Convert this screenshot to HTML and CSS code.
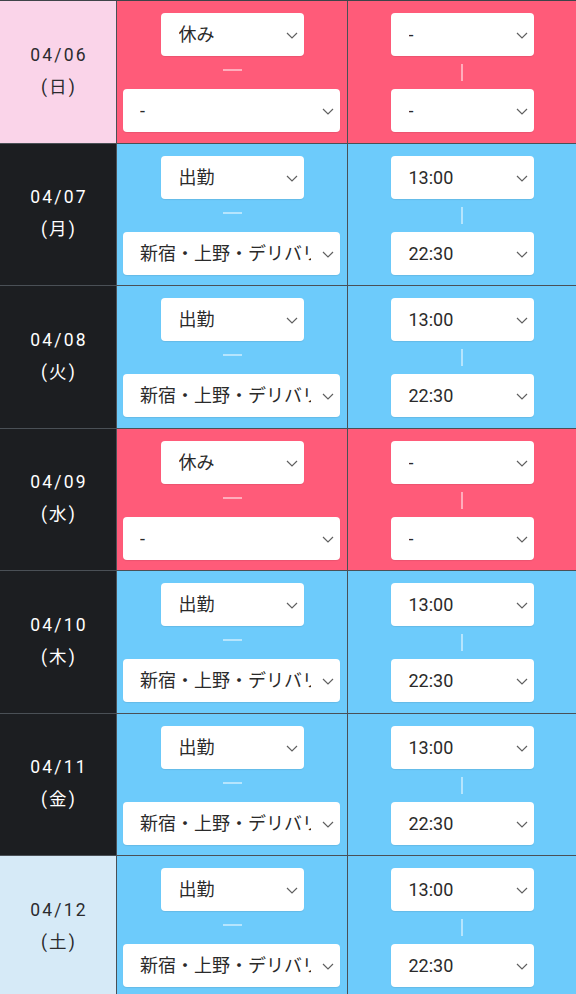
FILE: index.html
```html
<!DOCTYPE html>
<html>
  <head>
    <meta charset="utf-8" />
    <title>シフト提出</title>
    <link rel="stylesheet" href="styles.css">
  </head>

  <body>
    <div class="schedule">
      <div class="day sunday off">
        <div class="date">04/06<br />(日)</div>
        <div class="cell cell-status">
          <div class="picker picker-short">
            <select><option selected>休み</option><option>出勤</option></select>
            <svg class="chevron" viewBox="0 0 12 7"><polyline points="1,1 6,6 11,1" /></svg>
          </div>
          <div class="dash"></div>
          <div class="picker picker-wide">
            <select><option selected>-</option><option>新宿・上野・デリバリー</option></select>
            <svg class="chevron" viewBox="0 0 12 7"><polyline points="1,1 6,6 11,1" /></svg>
          </div>
        </div>
        <div class="cell cell-time">
          <div class="picker picker-short">
            <select><option selected>-</option><option>13:00</option></select>
            <svg class="chevron" viewBox="0 0 12 7"><polyline points="1,1 6,6 11,1" /></svg>
          </div>
          <div class="bar"></div>
          <div class="picker picker-short">
            <select><option selected>-</option><option>22:30</option></select>
            <svg class="chevron" viewBox="0 0 12 7"><polyline points="1,1 6,6 11,1" /></svg>
          </div>
        </div>
      </div>

      <div class="day weekday work">
        <div class="date">04/07<br />(月)</div>
        <div class="cell cell-status">
          <div class="picker picker-short">
            <select><option selected>出勤</option><option>休み</option></select>
            <svg class="chevron" viewBox="0 0 12 7"><polyline points="1,1 6,6 11,1" /></svg>
          </div>
          <div class="dash"></div>
          <div class="picker picker-wide">
            <select><option selected>新宿・上野・デリバリー</option><option>-</option></select>
            <svg class="chevron" viewBox="0 0 12 7"><polyline points="1,1 6,6 11,1" /></svg>
          </div>
        </div>
        <div class="cell cell-time">
          <div class="picker picker-short">
            <select><option selected>13:00</option><option>-</option></select>
            <svg class="chevron" viewBox="0 0 12 7"><polyline points="1,1 6,6 11,1" /></svg>
          </div>
          <div class="bar"></div>
          <div class="picker picker-short">
            <select><option selected>22:30</option><option>-</option></select>
            <svg class="chevron" viewBox="0 0 12 7"><polyline points="1,1 6,6 11,1" /></svg>
          </div>
        </div>
      </div>

      <div class="day weekday work">
        <div class="date">04/08<br />(火)</div>
        <div class="cell cell-status">
          <div class="picker picker-short">
            <select><option selected>出勤</option><option>休み</option></select>
            <svg class="chevron" viewBox="0 0 12 7"><polyline points="1,1 6,6 11,1" /></svg>
          </div>
          <div class="dash"></div>
          <div class="picker picker-wide">
            <select><option selected>新宿・上野・デリバリー</option><option>-</option></select>
            <svg class="chevron" viewBox="0 0 12 7"><polyline points="1,1 6,6 11,1" /></svg>
          </div>
        </div>
        <div class="cell cell-time">
          <div class="picker picker-short">
            <select><option selected>13:00</option><option>-</option></select>
            <svg class="chevron" viewBox="0 0 12 7"><polyline points="1,1 6,6 11,1" /></svg>
          </div>
          <div class="bar"></div>
          <div class="picker picker-short">
            <select><option selected>22:30</option><option>-</option></select>
            <svg class="chevron" viewBox="0 0 12 7"><polyline points="1,1 6,6 11,1" /></svg>
          </div>
        </div>
      </div>

      <div class="day weekday off">
        <div class="date">04/09<br />(水)</div>
        <div class="cell cell-status">
          <div class="picker picker-short">
            <select><option selected>休み</option><option>出勤</option></select>
            <svg class="chevron" viewBox="0 0 12 7"><polyline points="1,1 6,6 11,1" /></svg>
          </div>
          <div class="dash"></div>
          <div class="picker picker-wide">
            <select><option selected>-</option><option>新宿・上野・デリバリー</option></select>
            <svg class="chevron" viewBox="0 0 12 7"><polyline points="1,1 6,6 11,1" /></svg>
          </div>
        </div>
        <div class="cell cell-time">
          <div class="picker picker-short">
            <select><option selected>-</option><option>13:00</option></select>
            <svg class="chevron" viewBox="0 0 12 7"><polyline points="1,1 6,6 11,1" /></svg>
          </div>
          <div class="bar"></div>
          <div class="picker picker-short">
            <select><option selected>-</option><option>22:30</option></select>
            <svg class="chevron" viewBox="0 0 12 7"><polyline points="1,1 6,6 11,1" /></svg>
          </div>
        </div>
      </div>

      <div class="day weekday work">
        <div class="date">04/10<br />(木)</div>
        <div class="cell cell-status">
          <div class="picker picker-short">
            <select><option selected>出勤</option><option>休み</option></select>
            <svg class="chevron" viewBox="0 0 12 7"><polyline points="1,1 6,6 11,1" /></svg>
          </div>
          <div class="dash"></div>
          <div class="picker picker-wide">
            <select><option selected>新宿・上野・デリバリー</option><option>-</option></select>
            <svg class="chevron" viewBox="0 0 12 7"><polyline points="1,1 6,6 11,1" /></svg>
          </div>
        </div>
        <div class="cell cell-time">
          <div class="picker picker-short">
            <select><option selected>13:00</option><option>-</option></select>
            <svg class="chevron" viewBox="0 0 12 7"><polyline points="1,1 6,6 11,1" /></svg>
          </div>
          <div class="bar"></div>
          <div class="picker picker-short">
            <select><option selected>22:30</option><option>-</option></select>
            <svg class="chevron" viewBox="0 0 12 7"><polyline points="1,1 6,6 11,1" /></svg>
          </div>
        </div>
      </div>

      <div class="day weekday work">
        <div class="date">04/11<br />(金)</div>
        <div class="cell cell-status">
          <div class="picker picker-short">
            <select><option selected>出勤</option><option>休み</option></select>
            <svg class="chevron" viewBox="0 0 12 7"><polyline points="1,1 6,6 11,1" /></svg>
          </div>
          <div class="dash"></div>
          <div class="picker picker-wide">
            <select><option selected>新宿・上野・デリバリー</option><option>-</option></select>
            <svg class="chevron" viewBox="0 0 12 7"><polyline points="1,1 6,6 11,1" /></svg>
          </div>
        </div>
        <div class="cell cell-time">
          <div class="picker picker-short">
            <select><option selected>13:00</option><option>-</option></select>
            <svg class="chevron" viewBox="0 0 12 7"><polyline points="1,1 6,6 11,1" /></svg>
          </div>
          <div class="bar"></div>
          <div class="picker picker-short">
            <select><option selected>22:30</option><option>-</option></select>
            <svg class="chevron" viewBox="0 0 12 7"><polyline points="1,1 6,6 11,1" /></svg>
          </div>
        </div>
      </div>

      <div class="day saturday work">
        <div class="date">04/12<br />(土)</div>
        <div class="cell cell-status">
          <div class="picker picker-short">
            <select><option selected>出勤</option><option>休み</option></select>
            <svg class="chevron" viewBox="0 0 12 7"><polyline points="1,1 6,6 11,1" /></svg>
          </div>
          <div class="dash"></div>
          <div class="picker picker-wide">
            <select><option selected>新宿・上野・デリバリー</option><option>-</option></select>
            <svg class="chevron" viewBox="0 0 12 7"><polyline points="1,1 6,6 11,1" /></svg>
          </div>
        </div>
        <div class="cell cell-time">
          <div class="picker picker-short">
            <select><option selected>13:00</option><option>-</option></select>
            <svg class="chevron" viewBox="0 0 12 7"><polyline points="1,1 6,6 11,1" /></svg>
          </div>
          <div class="bar"></div>
          <div class="picker picker-short">
            <select><option selected>22:30</option><option>-</option></select>
            <svg class="chevron" viewBox="0 0 12 7"><polyline points="1,1 6,6 11,1" /></svg>
          </div>
        </div>
      </div>
    </div>
  </body>
</html>
```

FILE: styles.css
```css
body {
  margin: 0;
  font-family: Roboto, "Noto Sans CJK JP", sans-serif;
  background-color: #6dcbfb;
}

.schedule {
  border-top: 1px solid #3e4449;
}

.day {
  display: grid;
  grid-template-columns: 117px 231px 1fr;
  height: 142.5px;
  box-sizing: border-box;
  border-bottom: 1px solid #4a5056;
}

.date {
  display: flex;
  align-items: center;
  justify-content: center;
  text-align: center;
  box-sizing: border-box;
  border-right: 1px solid #4a5056;
  font-size: 17.5px;
  line-height: 32px;
  letter-spacing: 2.2px;
  padding-left: 2px;
  padding-bottom: 2px;
}

.sunday .date {
  background-color: #fad4e9;
  color: #2b2b2e;
}

.weekday .date {
  background-color: #1c1e21;
  color: #ffffff;
}

.saturday .date {
  background-color: #d6eaf7;
  color: #2b2b2e;
}

.cell {
  display: flex;
  flex-direction: column;
  align-items: center;
  padding-top: 12px;
  box-sizing: border-box;
}

.cell-status {
  border-right: 1px solid #4a5056;
}

.off .cell {
  background-color: #ff5b79;
}

.work .cell {
  background-color: #6dcbfb;
}

.picker {
  position: relative;
  height: 43px;
}

.picker-short {
  width: 143px;
}

.picker-wide {
  width: 217px;
  margin-left: -1px;
}

.picker select {
  appearance: none;
  -webkit-appearance: none;
  width: 100%;
  height: 100%;
  border: none;
  border-radius: 4px;
  background-color: #ffffff;
  color: #2a2a2a;
  font-family: Roboto, "Noto Sans CJK JP", sans-serif;
  font-size: 18px;
  padding: 0 31px 0 18px;
  box-shadow: 0 1px 1px rgba(0, 0, 0, 0.08);
}

.picker-wide select {
  padding-left: 17px;
  padding-right: 29px;
}

.chevron {
  position: absolute;
  right: 6px;
  top: 19px;
  width: 12px;
  height: 7px;
  fill: none;
  stroke: #606060;
  stroke-width: 1.2;
  pointer-events: none;
}

.dash,
.bar {
  background-color: rgba(255, 255, 255, 0.5);
}

.dash {
  width: 19px;
  height: 2px;
  margin: 13px 0 18px;
}

.bar {
  width: 2px;
  height: 17px;
  margin: 8px 0 8px;
}
```
